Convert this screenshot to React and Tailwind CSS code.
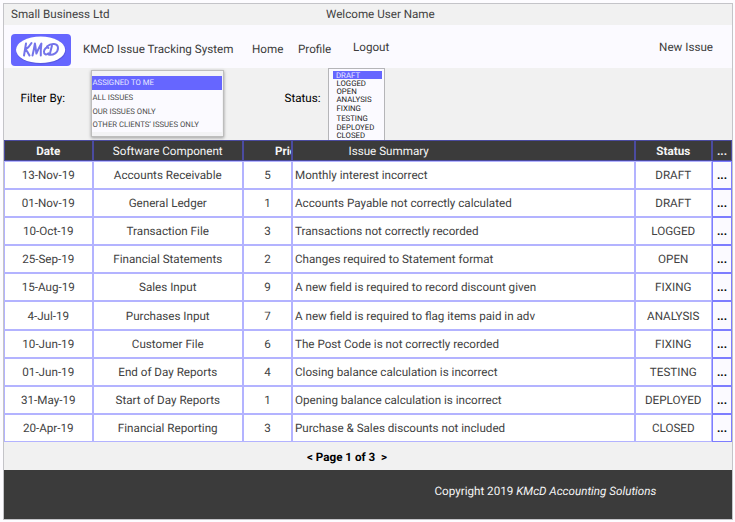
const issues = [
  ['13-Nov-19', 'Accounts Receivable', '5', 'Monthly interest incorrect', 'DRAFT'],
  ['01-Nov-19', 'General Ledger', '1', 'Accounts Payable not correctly calculated', 'DRAFT'],
  ['10-Oct-19', 'Transaction File', '3', 'Transactions not correctly recorded', 'LOGGED'],
  ['25-Sep-19', 'Financial Statements', '2', 'Changes required to Statement format', 'OPEN'],
  ['15-Aug-19', 'Sales Input', '9', 'A new field is required to record discount given', 'FIXING'],
  ['4-Jul-19', 'Purchases Input', '7', 'A new field is required to flag items paid in adv', 'ANALYSIS'],
  ['10-Jun-19', 'Customer File', '6', 'The Post Code is not correctly recorded', 'FIXING'],
  ['01-Jun-19', 'End of Day Reports', '4', 'Closing balance calculation is incorrect', 'TESTING'],
  ['31-May-19', 'Start of Day Reports', '1', 'Opening balance calculation is incorrect', 'DEPLOYED'],
  ['20-Apr-19', 'Financial Reporting', '3', 'Purchase & Sales discounts not included', 'CLOSED'],
];

const columns = 'grid grid-cols-[88.5px_150.5px_49px_342.5px_77.5px_20px]';
const cell = 'flex items-center justify-center overflow-hidden whitespace-nowrap border border-[#b3b3ff]';
const headCell = 'flex items-center overflow-hidden whitespace-nowrap border border-[#4b4ba0]';

function Logo() {
  return (
    <svg className="block h-[32px] w-[60px]" viewBox="0 0 60 32">
      <rect width="60" height="32" rx="4" fill="#6666ff" />
      <ellipse cx="30" cy="16.6" rx="25" ry="13.8" fill="#4a4ac0" opacity="0.45" />
      <ellipse cx="29.6" cy="15.8" rx="24.6" ry="13.3" fill="#fff" />
      <g fill="none" stroke="#7474ea" strokeWidth="2" strokeLinecap="round" strokeLinejoin="round">
        <path d="M15 9.500 13 21.500M20.500 9c-1.800 3-3.800 5.200-6 6.500 1.600 1.300 2.800 3.500 4 6" />
        <path d="M21.500 21.500c1-4 1.800-8 2.400-12 .6 3 1 6.500 1.500 10 1.600-3.500 3.200-7 5-10-.5 4-.8 8-.6 12" />
        <path d="M37.500 14c-2-1.500-4.300 1-4.500 3.500-.2 3 2.300 3.800 4.500 1.800" />
        <path d="M41 11.500 38.700 20.500M36 12.500c4-3.700 11-3.500 11 1.500 0 4.500-4.500 7.500-9.500 6.500" />
      </g>
    </svg>
  );
}

function Header() {
  return (
    <>
      <div className="flex h-[21px] items-center bg-[#f1f1f1] text-[#424242]">
        <span className="w-[315px] pl-[7px]">Small Business Ltd</span>
        <span className="pl-[7px]">Welcome User Name</span>
      </div>
      <nav className="flex h-[43px] items-start bg-[#fbfaff] leading-[16px] text-[#3c3c3c]">
        <div className="w-[79px] pl-[7px] pt-[9px]"><Logo /></div>
        <span className="w-[169px] pt-[16px]">KMcD Issue Tracking System</span>
        <span className="w-[46px] pt-[16px]">Home</span>
        <span className="w-[55px] pt-[16px]">Profile</span>
        <span className="pt-[14px]">Logout</span>
        <span className="ml-auto pr-[19px] pt-[14px]">New Issue</span>
      </nav>
    </>
  );
}

function Filters() {
  return (
    <div className="flex h-[72px] items-start bg-[#f1f1f1]">
      <span className="w-[87px] pl-[16.5px] pt-[22px] leading-[16px] text-black">Filter By:</span>
      <div className="mt-[2px] h-[67px] w-[133px] border border-[#bdbdbd] bg-[#f3f3f5] pr-[1px] pt-[5px] shadow-[0_1px_3px_rgba(0,0,0,0.35)]">
        <ul className="h-[56px] bg-[#fbfaff] text-[7.75px] leading-[13.7px] text-[#4a4a4a]">
          <li className="h-[14px] bg-[#6666ff] pl-[0.5px] leading-[14px] text-[#e8e8ff]">ASSIGNED TO ME</li>
          <li className="pl-[0.5px] pt-[1px]">ALL ISSUES</li>
          <li className="pl-[0.5px]">OUR ISSUES ONLY</li>
          <li className="pl-[0.5px]">OTHER CLIENTS’ ISSUES ONLY</li>
        </ul>
      </div>
      <span className="w-[104px] pl-[60.5px] pt-[22px] leading-[16px] text-black">Status:</span>
      <div className="h-[72px] w-[57px] overflow-hidden border border-b-0 border-[#b5b5b8] bg-[#fbfaff] px-[2px] pt-[2px] text-[7.8px] text-[#222]">
        <div className="ml-[2px] h-[8px] overflow-hidden bg-[#6666ff] pl-[3px] leading-[10px] text-[#e8e8ff]">DRAFT</div>
        <div className="pl-[5.5px] leading-[8px]">
          <div className="pt-px">LOGGED</div>
          <div>OPEN</div>
          <div>ANALYSIS</div>
          <div className="pt-px">FIXING</div>
          <div className="pt-[1.5px]">TESTING</div>
          <div className="pt-px">DEPLOYED</div>
          <div className="pt-[0.5px]">CLOSED</div>
        </div>
      </div>
    </div>
  );
}

function IssueTable() {
  return (
    <div className="leading-[16px] text-[#424242]">
      <div className={`${columns} h-[21px] bg-[#3b3b3b] text-[#f5f5f5]`}>
        <div className={`${headCell} justify-center font-bold`}>Date</div>
        <div className={`${headCell} justify-center pt-[1px]`}>Software Component</div>
        <div className={`${headCell} pl-[31px] font-bold`}>Priority</div>
        <div className={`${headCell} pl-[55.5px] pt-[1px]`}>Issue Summary</div>
        <div className={`${headCell} justify-center font-bold`}>Status</div>
        <div className={`${headCell} justify-center font-bold`}>...</div>
      </div>
      {issues.map(([date, component, priority, summary, status]) => (
        <div key={date} className={`${columns} h-[28.1px] bg-white`}>
          <div className={cell}>{date}</div>
          <div className={cell}>{component}</div>
          <div className={cell}>{priority}</div>
          <div className={`${cell} justify-start pl-[2px]`}>{summary}</div>
          <div className={cell}>{status}</div>
          <div className="flex items-center justify-center border border-[#7d7dff] bg-[#fbfaff] font-bold text-black">...</div>
        </div>
      ))}
    </div>
  );
}

export default function App() {
  return (
    <div className="h-[522px] w-[735px] bg-[#fdfcff] p-[3px] font-['Roboto',sans-serif] text-[11.65px] [text-rendering:geometricPrecision]">
      <main className="h-[517px] w-[730px] border border-[#c4c4c8] bg-[#f1f1f1]">
        <Header />
        <Filters />
        <IssueTable />
        <div className="flex h-[28px] items-center whitespace-pre pl-[303px] pt-[4px] font-bold text-black">{'< Page 1 of 3  >'}</div>
        <footer className="flex h-[49px] items-start bg-[#3b3b3b] pl-[430.5px] pt-[13px] leading-[16px] text-[#f5f5f5]">
          <p>Copyright 2019 <em>KMcD Accounting Solutions</em></p>
        </footer>
      </main>
    </div>
  );
}
